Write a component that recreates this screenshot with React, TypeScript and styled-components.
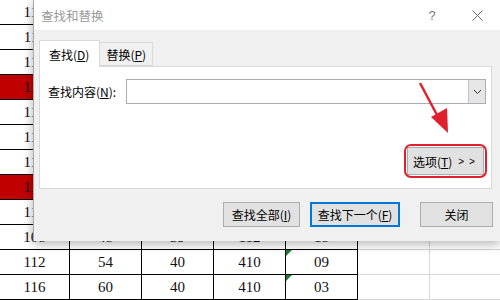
import React from "react";
import styled, { createGlobalStyle } from "styled-components";

const GlobalStyle = createGlobalStyle`
  html, body { margin: 0; padding: 0; background: #fff; }
  body { width: 500px; height: 300px; overflow: hidden; }
`;

const Page = styled.div`
  position: relative;
  width: 500px;
  height: 300px;
  overflow: hidden;
  background: #fff;
`;

const Sheet = styled.div`
  display: flex;
  flex-direction: column;
`;

const SheetRow = styled.div`
  display: flex;
  height: 25px;
`;

const Cell = styled.div<{ $w: number; $red?: boolean; $light?: boolean; $mark?: boolean }>`
  position: relative;
  box-sizing: border-box;
  width: ${(p) => p.$w}px;
  flex: none;
  height: 25px;
  border-right: 1px solid ${(p) => (p.$light ? "#d6d6d6" : "#000")};
  border-bottom: 1px solid ${(p) => (p.$light ? "#d6d6d6" : "#000")};
  background: ${(p) => (p.$red ? "#c00000" : "#fff")};
  font-family: "Liberation Serif", "DejaVu Serif", serif;
  font-size: 15px;
  color: #111;
  display: flex;
  align-items: center;
  justify-content: center;
  &::before {
    content: "";
    display: ${(p) => (p.$mark ? "block" : "none")};
    position: absolute;
    left: 0;
    top: 0;
    border-top: 6px solid #1e7d32;
    border-right: 6px solid transparent;
  }
`;

const Dialog = styled.div`
  position: absolute;
  left: 33px;
  top: 0;
  width: 467px;
  height: 241px;
  box-sizing: border-box;
  background: #f0f0f0;
  border-left: 1px solid #a8a8a8;
  box-shadow: 0 3px 10px rgba(0, 0, 0, 0.3);
  display: flex;
  flex-direction: column;
  font-family: "Noto Sans CJK SC", "Microsoft YaHei", sans-serif;
  font-size: 12px;
  color: #000;
`;

const TitleBar = styled.div`
  height: 30px;
  flex: none;
  background: #fff;
  display: flex;
  align-items: center;
  padding-left: 7px;
`;

const Title = styled.div`
  flex: 1;
  color: #9a9a9a;
  font-size: 12.5px;
`;

const Help = styled.div`
  width: 20px;
  text-align: center;
  color: #7a7a7a;
  font-family: "Liberation Sans", sans-serif;
  font-size: 13px;
  margin-right: 30px;
`;

const CloseX = styled.svg`
  width: 11px;
  height: 11px;
  margin-right: 17px;
`;

const Body = styled.div`
  flex: 1;
  display: flex;
  flex-direction: column;
  padding: 10px 8px 0 5px;
`;

const TabList = styled.div`
  display: flex;
  align-items: flex-end;
  height: 26px;
  position: relative;
  z-index: 1;
`;

const Tab = styled.div<{ $active?: boolean }>`
  box-sizing: border-box;
  height: ${(p) => (p.$active ? 27 : 24)}px;
  margin-bottom: ${(p) => (p.$active ? -1 : 0)}px;
  padding: 0 ${(p) => (p.$active ? 10 : 6)}px 0 ${(p) => (p.$active ? 9 : 6)}px;
  background: ${(p) => (p.$active ? "#fff" : "#f0f0f0")};
  border: 1px solid #d9d9d9;
  border-bottom: ${(p) => (p.$active ? "none" : "1px solid #d9d9d9")};
  border-left: ${(p) => (p.$active ? "1px solid #d9d9d9" : "none")};
  display: flex;
  align-items: center;
  padding-top: ${(p) => (p.$active ? 0 : 1)}px;
`;

const Panel = styled.div`
  position: relative;
  box-sizing: border-box;
  height: 123px;
  background: #fff;
  border: 1px solid #d9d9d9;
  display: flex;
  flex-direction: column;
  padding: 12px 5px 0 8px;
`;

const FieldRow = styled.div`
  display: flex;
  align-items: center;
  height: 25px;
`;

const Label = styled.div`
  width: 78px;
  flex: none;
`;

const Combo = styled.div`
  flex: 1;
  box-sizing: border-box;
  height: 25px;
  border: 1px solid #abadb3;
  display: flex;
  justify-content: flex-end;
`;

const ComboArrow = styled.div`
  box-sizing: border-box;
  width: 17px;
  height: 100%;
  background: #e6e6e6;
  border-left: 1px solid #c4c4c4;
  display: flex;
  align-items: center;
  justify-content: center;
`;

const OptionsRow = styled.div`
  display: flex;
  justify-content: flex-end;
  margin-top: 43px;
  padding-right: 2px;
`;

const OptionsWrap = styled.div`
  position: relative;
`;

const Button = styled.div<{ $w: number; $h?: number; $primary?: boolean }>`
  box-sizing: border-box;
  width: ${(p) => p.$w}px;
  height: ${(p) => p.$h ?? 25}px;
  background: #e1e1e1;
  border: ${(p) => (p.$primary ? "2px solid #0078d7" : "1px solid #adadad")};
  display: flex;
  align-items: center;
  justify-content: center;
`;

const OptionsButton = styled(Button)`
  justify-content: flex-start;
  padding-left: 5px;
  gap: 6px;
`;

const Chevrons = styled.span`
  font-family: "Liberation Sans", sans-serif;
  font-size: 10px;
  letter-spacing: 1px;
`;

const RedRing = styled.div`
  position: absolute;
  left: -3px;
  top: -3px;
  right: -3px;
  bottom: -3px;
  border: 2.5px solid #e0212d;
  border-radius: 7px;
`;

const Arrow = styled.svg`
  position: absolute;
  left: 0;
  top: 0;
  overflow: visible;
  pointer-events: none;
`;

const ButtonRow = styled.div`
  display: flex;
  justify-content: flex-end;
  margin-top: 13px;
  margin-right: -1px;
`;

const Gap = styled.div<{ $w: number }>`
  width: ${(p) => p.$w}px;
  flex: none;
`;

const widths = [70, 72, 72, 72, 72, 72, 72];

const rows: { vals: string[]; red?: boolean; mark?: boolean }[] = [
  { vals: ["114", "", "", "", ""] },
  { vals: ["111", "", "", "", ""] },
  { vals: ["115", "", "", "", ""] },
  { vals: ["113", "", "", "", ""], red: true },
  { vals: ["117", "", "", "", ""] },
  { vals: ["110", "", "", "", ""] },
  { vals: ["118", "", "", "", ""] },
  { vals: ["119", "", "", "", ""], red: true },
  { vals: ["112", "", "", "", ""] },
  { vals: ["108", "48", "39", "112", "18"] },
  { vals: ["112", "54", "40", "410", "09"], mark: true },
  { vals: ["116", "60", "40", "410", "03"], mark: true },
];

export default function App() {
  return (
    <Page>
      <GlobalStyle />
      <Sheet>
        {rows.map((r, i) => (
          <SheetRow key={i}>
            {widths.map((w, j) => (
              <Cell
                key={j}
                $w={w}
                $light={j >= 5}
                $red={r.red && j === 0}
                $mark={r.mark && j === 4}
              >
                {j < 5 ? r.vals[j] : ""}
              </Cell>
            ))}
          </SheetRow>
        ))}
      </Sheet>

      <Dialog>
        <TitleBar>
          <Title>查找和替换</Title>
          <Help>?</Help>
          <CloseX viewBox="0 0 11 11">
            <path d="M0.5 0.5 L10.5 10.5 M10.5 0.5 L0.5 10.5" stroke="#6a6a6a" strokeWidth="1" fill="none" />
          </CloseX>
        </TitleBar>
        <Body>
          <TabList>
            <Tab $active>
              查找(<u>D</u>)
            </Tab>
            <Tab>
              替换(<u>P</u>)
            </Tab>
          </TabList>
          <Panel>
            <FieldRow>
              <Label>
                查找内容(<u>N</u>):
              </Label>
              <Combo>
                <ComboArrow>
                  <svg width="9" height="6" viewBox="0 0 9 6">
                    <path d="M1 1 L4.5 4.5 L8 1" stroke="#333" strokeWidth="1" fill="none" />
                  </svg>
                </ComboArrow>
              </Combo>
            </FieldRow>
            <OptionsRow>
              <OptionsWrap>
                <OptionsButton $w={77} $h={28}>
                  <span>
                    选项(<u>T</u>)
                  </span>
                  <Chevrons>&gt; &gt;</Chevrons>
                </OptionsButton>
                <RedRing />
              </OptionsWrap>
            </OptionsRow>
            <Arrow width="453" height="123" viewBox="0 0 453 123">
              <line x1="380" y1="16" x2="397" y2="48" stroke="#e0212d" strokeWidth="2.5" />
              <polygon points="391,50 407,41 408,66" fill="#e0212d" />
            </Arrow>
          </Panel>
          <ButtonRow>
            <Button $w={77}>
              查找全部(<u>I</u>)
            </Button>
            <Gap $w={10} />
            <Button $w={90} $primary>
              查找下一个(<u>F</u>)
            </Button>
            <Gap $w={20} />
            <Button $w={73}>关闭</Button>
          </ButtonRow>
        </Body>
      </Dialog>
    </Page>
  );
}
